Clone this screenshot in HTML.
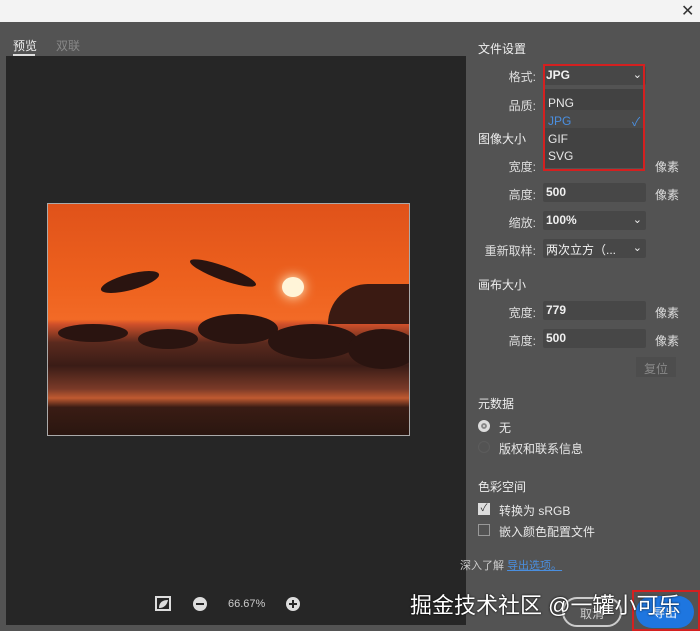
<!DOCTYPE html>
<html><head><meta charset="utf-8"><style>
*{margin:0;padding:0;box-sizing:border-box}
body{width:700px;height:631px;overflow:hidden;background:#535353;font-family:"Liberation Sans","Noto Sans CJK SC",sans-serif;font-size:12px;color:#e8e8e8;position:relative}
.a{position:absolute}
.lbl{position:absolute;text-align:right;width:80px;left:456px;font-size:12px;color:#ddd}
.inp{position:absolute;left:543px;width:103px;height:19px;background:#474747;border-radius:2px;font-weight:bold;font-size:12px;padding:2px 3px;color:#f0f0f0}
.unit{position:absolute;left:655px;color:#ddd}
.h{position:absolute;left:478px;color:#eee;font-size:12px}
.chev{position:absolute;right:4px;top:2px;font-weight:normal;font-size:11px}
.b{position:absolute;background:#2a1410;border-radius:50%}
</style></head><body>
<div class="a" style="left:0;top:0;width:700px;height:22px;background:#f3f3f3"></div>
<div class="a" style="left:681px;top:1px;font-size:16px;color:#333">✕</div>
<div class="a" style="left:13px;top:37px;color:#eee">预览</div>
<div class="a" style="left:13px;top:54px;width:22px;height:2px;background:#ddd"></div>
<div class="a" style="left:56px;top:37px;color:#888">双联</div>
<div class="a" style="left:6px;top:56px;width:460px;height:569px;background:#262626"></div>
<div class="a" style="left:47px;top:203px;width:363px;height:233px;background:linear-gradient(#e0521a 0%,#ee621e 35%,#f26a26 50%,#d0502a 52%,#5a2a1e 60%,#3a1c16 70%,#7a3a28 80%,#c05a30 84%,#3a1c14 88%,#2a1610 100%);border:1px solid #aaa;overflow:hidden">
<div class="a" style="left:234px;top:73px;width:22px;height:20px;border-radius:50%;background:#fff4d8;box-shadow:0 0 12px #ffd"></div>
<div class="a" style="left:280px;top:80px;width:90px;height:40px;background:#3a1a12;border-radius:40px 10px 0 0"></div>
<div class="b" style="left:52px;top:70px;width:60px;height:16px;transform:rotate(-15deg)"></div>
<div class="b" style="left:140px;top:62px;width:70px;height:14px;transform:rotate(20deg)"></div>
<div class="b" style="left:10px;top:120px;width:70px;height:18px"></div>
<div class="b" style="left:90px;top:125px;width:60px;height:20px"></div>
<div class="b" style="left:150px;top:110px;width:80px;height:30px"></div>
<div class="b" style="left:220px;top:120px;width:90px;height:35px"></div>
<div class="b" style="left:300px;top:125px;width:70px;height:40px"></div>
</div>
<svg class="a" style="left:155px;top:596px" width="150" height="16">
<rect x="1" y="1" width="14" height="13" fill="none" stroke="#ddd" stroke-width="2"/><path d="M4 12 C4 6 8 4 13 4 C12 9 9 12 4 12Z" fill="#ddd"/>
<circle cx="45" cy="8" r="7" fill="#ddd"/><rect x="41" y="7" width="8" height="2" fill="#262626"/>
<circle cx="138" cy="8" r="7" fill="#ddd"/><rect x="134" y="7" width="8" height="2" fill="#262626"/><rect x="137" y="4" width="2" height="8" fill="#262626"/>
</svg>
<div class="a" style="left:228px;top:598px;color:#ccc;font-size:11px">66.67%</div>

<div class="h" style="top:40px">文件设置</div>
<div class="lbl" style="top:68px">格式:</div>
<div class="inp" style="top:66px">JPG<span class="chev">⌄</span></div>
<div class="lbl" style="top:97px">品质:</div>
<div class="a" style="left:545px;top:89px;width:99px;height:79px;background:#424242"></div>
<div class="a" style="left:545px;top:110px;width:99px;height:18px;background:#4a4a4a"></div>
<div class="a" style="left:548px;top:96px;color:#e8e8e8">PNG</div>
<div class="a" style="left:548px;top:114px;color:#4a8fe0">JPG</div>
<div class="a" style="left:632px;top:113px;color:#4a8fe0">✓</div>
<div class="a" style="left:548px;top:132px;color:#e8e8e8">GIF</div>
<div class="a" style="left:548px;top:149px;color:#e8e8e8">SVG</div>
<div class="a" style="left:543px;top:64px;width:102px;height:107px;border:2px solid #d42020"></div>
<div class="h" style="top:130px">图像大小</div>
<div class="lbl" style="top:158px">宽度:</div>
<div class="unit" style="top:158px">像素</div>
<div class="lbl" style="top:186px">高度:</div>
<div class="inp" style="top:183px">500</div>
<div class="unit" style="top:186px">像素</div>
<div class="lbl" style="top:214px">缩放:</div>
<div class="inp" style="top:211px">100%<span class="chev">⌄</span></div>
<div class="lbl" style="top:242px">重新取样:</div>
<div class="inp" style="top:239px;font-weight:normal">两次立方（...<span class="chev">⌄</span></div>
<div class="h" style="top:276px">画布大小</div>
<div class="lbl" style="top:304px">宽度:</div>
<div class="inp" style="top:301px">779</div>
<div class="unit" style="top:304px">像素</div>
<div class="lbl" style="top:332px">高度:</div>
<div class="inp" style="top:329px">500</div>
<div class="unit" style="top:332px">像素</div>
<div class="a" style="left:636px;top:357px;width:40px;height:20px;background:#4d4d4d;color:#888;text-align:center;padding-top:3px">复位</div>
<div class="h" style="top:395px">元数据</div>
<div class="a" style="left:478px;top:420px;width:12px;height:12px;border-radius:50%;background:#ddd;border:3px solid #ddd;box-shadow:inset 0 0 0 2px #888"></div>
<div class="a" style="left:499px;top:419px">无</div>
<div class="a" style="left:478px;top:441px;width:12px;height:12px;border-radius:50%;border:1px solid #5c5c5c"></div>
<div class="a" style="left:499px;top:440px">版权和联系信息</div>
<div class="h" style="top:478px">色彩空间</div>
<div class="a" style="left:478px;top:503px;width:12px;height:12px;background:#ddd;color:#333;font-size:10px;line-height:12px;text-align:center">✓</div>
<div class="a" style="left:499px;top:502px">转换为 sRGB</div>
<div class="a" style="left:478px;top:524px;width:12px;height:12px;border:1px solid #999"></div>
<div class="a" style="left:499px;top:523px">嵌入颜色配置文件</div>
<div class="a" style="left:460px;top:557px;font-size:11px;color:#ccc">深入了解 <span style="color:#4a8fe0;text-decoration:underline">导出选项。</span></div>
<div class="a" style="left:562px;top:597px;width:60px;height:30px;border:2px solid #ccc;border-radius:16px;color:#ccc;text-align:center;padding-top:6px">取消</div>
<div class="a" style="left:636px;top:596px;width:58px;height:32px;background:#1e76e0;border-radius:16px;text-align:center;padding-top:8px;color:#fff">导出</div>
<div class="a" style="left:632px;top:590px;width:68px;height:41px;border:2px solid #d42020"></div>
<div class="a" style="left:410px;top:588px;font-size:22px;color:#fff;text-shadow:0 0 2px #000">掘金技术社区 @一罐小可乐</div>
</body></html>
